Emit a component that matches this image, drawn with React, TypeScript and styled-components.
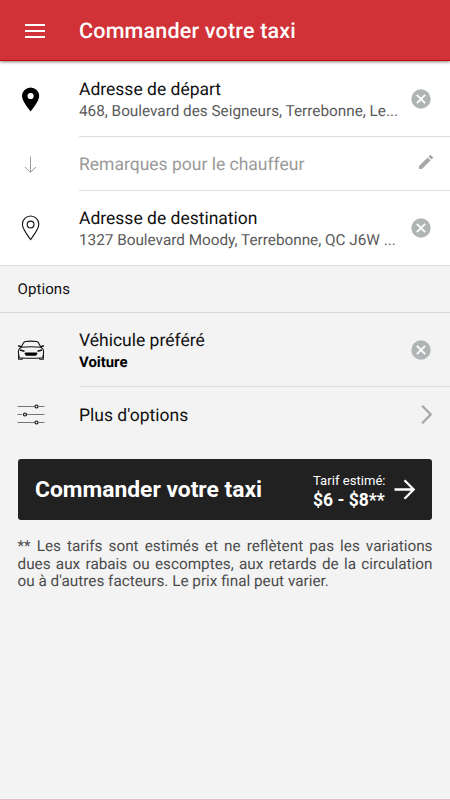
import React from "react";
import styled, { createGlobalStyle } from "styled-components";

const GlobalStyle = createGlobalStyle`
  * { box-sizing: border-box; }
  body { margin: 0; background: #f3f3f3; font-family: Roboto, "Liberation Sans", sans-serif; color: #111; -webkit-font-smoothing: antialiased; text-rendering: geometricPrecision; }
  button { font-family: inherit; border: 0; padding: 0; background: none; display: flex; }
  svg { display: block; }
  p, h1, h2 { margin: 0; }
`;

const Screen = styled.div`
  height: 800px;
  display: flex;
  flex-direction: column;
  background: #f3f3f3;
  border-bottom: 1px solid #e3bdc1;
  overflow: hidden;
`;

const Header = styled.header`
  flex: none;
  height: 61px;
  display: flex;
  align-items: center;
  background: #d13237;
  border-bottom: 1px solid #c80408;
  box-shadow: 0 1px 3px rgba(0, 0, 0, 0.5);
  z-index: 1;
`;

const MenuButton = styled.button`
  width: 54px;
  margin-right: 25px;
  padding: 1px 0 0 25px;
`;

const Title = styled.h1`
  color: #fff;
  font-size: 21.5px;
  font-weight: 500;
  line-height: 26px;
  padding-top: 4px;
  letter-spacing: 0.2px;
  white-space: nowrap;
`;

const Panel = styled.section<{ $white?: boolean }>`
  flex: none;
  background: ${(p) => (p.$white ? "#fff" : "transparent")};
  border-bottom: ${(p) => (p.$white ? "1px solid #dedede" : "0")};
`;

const Row = styled.div<{ $height: number }>`
  display: flex;
  height: ${(p) => p.$height}px;
`;

const Leading = styled.div`
  flex: none;
  width: 79px;
  padding-left: 17px;
  display: flex;
  align-items: center;
`;

const RowBody = styled.div<{ $divided?: boolean }>`
  flex: 1;
  min-width: 0;
  display: flex;
  align-items: center;
  border-bottom: ${(p) => (p.$divided ? "1px solid #dedede" : "0")};
`;

const RowText = styled.div<{ $top?: number }>`
  width: 328px;
  padding-top: ${(p) => p.$top ?? 2}px;
`;

const Label = styled.p<{ $muted?: boolean }>`
  font-size: 17.5px;
  line-height: 22px;
  font-weight: 400;
  color: ${(p) => (p.$muted ? "#999" : "#101010")};
  white-space: nowrap;
`;

const Detail = styled.p`
  font-size: 15.3px;
  line-height: 20px;
  font-weight: 400;
  color: #5a5a5a;
  white-space: nowrap;
`;

const Choice = styled.p`
  font-size: 14.9px;
  line-height: 20px;
  font-weight: 700;
  color: #000;
`;

const Trailing = styled.button<{ $edge?: boolean }>`
  width: ${(p) => (p.$edge ? 26 : 27)}px;
  justify-content: ${(p) => (p.$edge ? "flex-end" : "center")};
`;

const SectionTitle = styled.h2`
  height: 47px;
  padding-left: 17.5px;
  border-bottom: 1px solid #d8d8d8;
  font-size: 15px;
  font-weight: 400;
  line-height: 47px;
  letter-spacing: 0.1px;
`;

const OrderButton = styled.button`
  flex: none;
  height: 61px;
  margin: 17px 18px 0 17.5px;
  padding: 0 16px 0 17.5px;
  align-items: center;
  background: #212121;
  border-radius: 3px;
  color: #fff;
  text-align: left;
`;

const OrderLabel = styled.span`
  width: 278px;
  font-size: 22.8px;
  font-weight: 700;
  white-space: nowrap;
`;

const Fare = styled.span`
  display: flex;
  flex-direction: column;
  width: 81px;
  padding-top: 2px;
  white-space: nowrap;
`;

const FareLabel = styled.span`
  font-size: 13px;
  line-height: 18px;
  letter-spacing: 0.05px;
`;

const FareValue = styled.span`
  font-size: 17.5px;
  line-height: 20px;
  font-weight: 700;
`;

const Note = styled.p`
  margin: 18px 17.5px 0;
  color: #4c4c4c;
  font-size: 15.3px;
  font-weight: 400;
  line-height: 17.6px;
`;

const NoteLine = styled.span<{ $justify?: boolean }>`
  display: block;
  white-space: nowrap;
  text-align: left;
  text-align-last: ${(p) => (p.$justify ? "justify" : "left")};
`;

const MenuIcon = () => (
  <svg width="20" height="14" fill="#fff">
    <path d="M0 0h20v2H0zM0 6h20v2H0zM0 12h20v2H0z" />
  </svg>
);

const PinIcon = ({ filled }: { filled?: boolean }) => (
  <svg width="28" height="28" viewBox="0 0 28 28">
    {filled ? (
      <path
        fill="#000"
        fillRule="evenodd"
        d="M13.6 2.400a8.6 8.6 0 0 0-8.6 8.6c0 5.500 8.600 15.400 8.600 15.400S22.200 16.500 22.200 11a8.600 8.600 0 0 0-8.600-8.600zm0 5.500a3.100 3.100 0 1 1 0 6.200a3.100 3.100 0 0 1 0-6.200z"
      />
    ) : (
      <g fill="none" stroke="#161616" strokeWidth="1.15">
        <path d="M13.600 2a8.200 8.200 0 0 0-8.200 8.200c0 4.800 5.300 11.200 8.200 15.300c2.900-4.100 8.200-10.500 8.200-15.300A8.200 8.200 0 0 0 13.600 2z" />
        <circle cx="13.600" cy="10.500" r="3.400" />
      </g>
    )}
  </svg>
);

const DownIcon = () => (
  <svg width="28" height="18" fill="none" stroke="#9b9b9b" strokeWidth="1">
    <path d="M13.500 1.500v15.500M8 12l5.500 5.300L19 12" />
  </svg>
);

const ClearIcon = () => (
  <svg width="20" height="20" viewBox="0 0 20 20">
    <circle cx="10" cy="10" r="9.700" fill="#afb4b5" />
    <path d="M5.900 5.900l8.200 8.200M14.100 5.900l-8.200 8.200" stroke="#fff" strokeWidth="1.900" />
  </svg>
);

const PencilIcon = () => (
  <svg width="14" height="17" viewBox="3 3 18 21.860" fill="#a7a7a7">
    <path d="M3 17.250V21h3.750L17.810 9.940l-3.750-3.750zM20.710 7.040a1 1 0 0 0 0-1.410l-2.340-2.340a1 1 0 0 0-1.410 0l-1.830 1.830 3.750 3.750z" />
  </svg>
);

const CarIcon = () => (
  <svg width="28" height="22" viewBox="0 0 28 22" fill="none" stroke="#111" strokeWidth="1.100" strokeLinejoin="round">
    <path d="M4.200 8.300L6.400 4Q7 2.700 8.500 2.500Q14 1.700 19.500 2.500Q21 2.700 21.600 4L23.800 8.300" />
    <path d="M4 8.300Q14 7.300 24 8.300L26 10.200Q26.800 11.500 26.500 14.500L26 18.800Q14 19.800 2 18.800L1.500 14.500Q1.200 11.500 2 10.200z" />
    <path d="M4.300 7.800L1.200 6.700M23.700 7.800l3.100-1.100" strokeWidth="1.500" />
    <path d="M1.700 16v4.300h3.400l.5-1.200M26.300 16v4.300h-3.400l-.5-1.200" />
    <path d="M3 11l4.500 1.300M25 11l-4.500 1.300" strokeWidth="1.700" />
    <path d="M9 13.600h10q1.500 0 1.500 1L19 16.800H9L7.500 14.600q0-1 1.500-1z" fill="#000" stroke="none" />
  </svg>
);

const SlidersIcon = () => (
  <svg width="28" height="22" viewBox="0 0 28 22" fill="none">
    <path d="M.500 2.500h17M22 2.500h5.500M.500 10.500H5M10 10.500h17.500M.500 18.500h17M22 18.500h5.500" stroke="#777" strokeWidth="1.100" />
    <g stroke="#111" strokeWidth="1.200">
      <circle cx="19.500" cy="2.500" r="1.500" />
      <circle cx="8" cy="10.500" r="1.500" />
      <circle cx="19.500" cy="18.500" r="1.500" />
    </g>
  </svg>
);

const ChevronIcon = () => (
  <svg width="12" height="20" fill="none" stroke="#a6a6a6" strokeWidth="2.300">
    <path d="M1.200 .8L9.700 9.500l-8.500 8.700" />
  </svg>
);

const ArrowIcon = () => (
  <svg width="22" height="22" fill="none" stroke="#fff" strokeWidth="2.300">
    <path d="M.500 10.500h19M10.500 1.300l9.200 9.200l-9.200 9.200" />
  </svg>
);

export default function App() {
  return (
    <>
      <GlobalStyle />
      <Screen>
        <Header>
          <MenuButton aria-label="Menu"><MenuIcon /></MenuButton>
          <Title>Commander votre taxi</Title>
        </Header>
        <Panel $white>
          <Row $height={76}>
            <Leading><PinIcon filled /></Leading>
            <RowBody $divided>
              <RowText $top={3}>
                <Label>Adresse de départ</Label>
                <Detail>468, Boulevard des Seigneurs, Terrebonne, Le...</Detail>
              </RowText>
              <Trailing aria-label="Effacer"><ClearIcon /></Trailing>
            </RowBody>
          </Row>
          <Row $height={54}>
            <Leading><DownIcon /></Leading>
            <RowBody $divided>
              <RowText $top={3}><Label $muted>Remarques pour le chauffeur</Label></RowText>
              <Trailing $edge aria-label="Modifier"><PencilIcon /></Trailing>
            </RowBody>
          </Row>
          <Row $height={74}>
            <Leading><PinIcon /></Leading>
            <RowBody>
              <RowText>
                <Label>Adresse de destination</Label>
                <Detail>1327 Boulevard Moody, Terrebonne, QC J6W ...</Detail>
              </RowText>
              <Trailing aria-label="Effacer"><ClearIcon /></Trailing>
            </RowBody>
          </Row>
        </Panel>
        <Panel>
          <SectionTitle>Options</SectionTitle>
          <Row $height={74}>
            <Leading><CarIcon /></Leading>
            <RowBody $divided>
              <RowText>
                <Label>Véhicule préféré</Label>
                <Choice>Voiture</Choice>
              </RowText>
              <Trailing aria-label="Effacer"><ClearIcon /></Trailing>
            </RowBody>
          </Row>
          <Row $height={55}>
            <Leading><SlidersIcon /></Leading>
            <RowBody>
              <RowText><Label>Plus d'options</Label></RowText>
              <Trailing $edge aria-label="Ouvrir"><ChevronIcon /></Trailing>
            </RowBody>
          </Row>
        </Panel>
        <OrderButton>
          <OrderLabel>Commander votre taxi</OrderLabel>
          <Fare>
            <FareLabel>Tarif estimé:</FareLabel>
            <FareValue>$6 - $8**</FareValue>
          </Fare>
          <ArrowIcon />
        </OrderButton>
        <Note>
          <NoteLine $justify>** Les tarifs sont estimés et ne reflètent pas les variations</NoteLine>
          <NoteLine $justify>dues aux rabais ou escomptes, aux retards de la circulation</NoteLine>
          <NoteLine>ou à d'autres facteurs. Le prix final peut varier.</NoteLine>
        </Note>
      </Screen>
    </>
  );
}
